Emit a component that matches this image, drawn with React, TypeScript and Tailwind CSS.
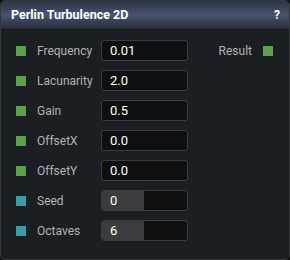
import React from "react";

const rows: { label: string; value: string; kind: "num" | "int"; fill?: number }[] = [
  { label: "Frequency", value: "0.01", kind: "num" },
  { label: "Lacunarity", value: "2.0", kind: "num" },
  { label: "Gain", value: "0.5", kind: "num" },
  { label: "OffsetX", value: "0.0", kind: "num" },
  { label: "OffsetY", value: "0.0", kind: "num" },
  { label: "Seed", value: "0", kind: "int", fill: 42 },
  { label: "Octaves", value: "6", kind: "int", fill: 42 },
];

export default function App() {
  return (
    <div
      className="w-[290px] h-[260px] bg-[#101114] overflow-hidden"
      style={{ fontFamily: "Roboto, 'Liberation Sans', sans-serif" }}
    >
      <div className="w-[290px] h-[260px] rounded-[5px] border border-[#34373d] bg-[#1b1e23] flex flex-col overflow-hidden">
        <div className="h-[29px] shrink-0 flex items-center justify-between pl-[10px] pr-[9px] bg-gradient-to-b from-[#2c3444] via-[#48536c] to-[#272e3c] border-b border-[#121419]">
          <span className="text-white font-bold text-[12.5px]">Perlin Turbulence 2D</span>
          <span className="text-white font-bold text-[12px]">?</span>
        </div>
        <div className="flex pt-[10px]">
          <div className="flex flex-col gap-[9px] pl-[15px]">
            {rows.map((r) => (
              <div key={r.label} className="flex items-center h-[21px]">
                <div
                  className={`w-[10px] h-[10px] ${r.kind === "num" ? "bg-[#5e9f4c]" : "bg-[#3a9ea5]"}`}
                />
                <span className="ml-[11px] w-[64px] text-[12px] text-[#b1b4b9]">{r.label}</span>
                {r.kind === "num" ? (
                  <div className="w-[87px] h-[21px] rounded-[3px] border border-[#3b3d41] bg-[#0e0f11] flex items-center pl-[8px] text-[13px] text-white">
                    {r.value}
                  </div>
                ) : (
                  <div className="w-[87px] h-[21px] rounded-[3px] border border-[#3b3d41] bg-[#0e0f11] relative overflow-hidden flex items-center">
                    <div className="absolute left-0 top-0 bottom-0 w-[42px] bg-[#3b3c3f] rounded-l-[2px]" />
                    <span className="relative pl-[8px] text-[13px] text-white">{r.value}</span>
                  </div>
                )}
              </div>
            ))}
          </div>
          <div className="flex-1 flex justify-end pr-[16px]">
            <div className="flex items-center h-[21px]">
              <span className="text-[12px] text-[#b1b4b9]">Result</span>
              <div className="ml-[11px] w-[10px] h-[10px] bg-[#5e9f4c]" />
            </div>
          </div>
        </div>
      </div>
    </div>
  );
}
